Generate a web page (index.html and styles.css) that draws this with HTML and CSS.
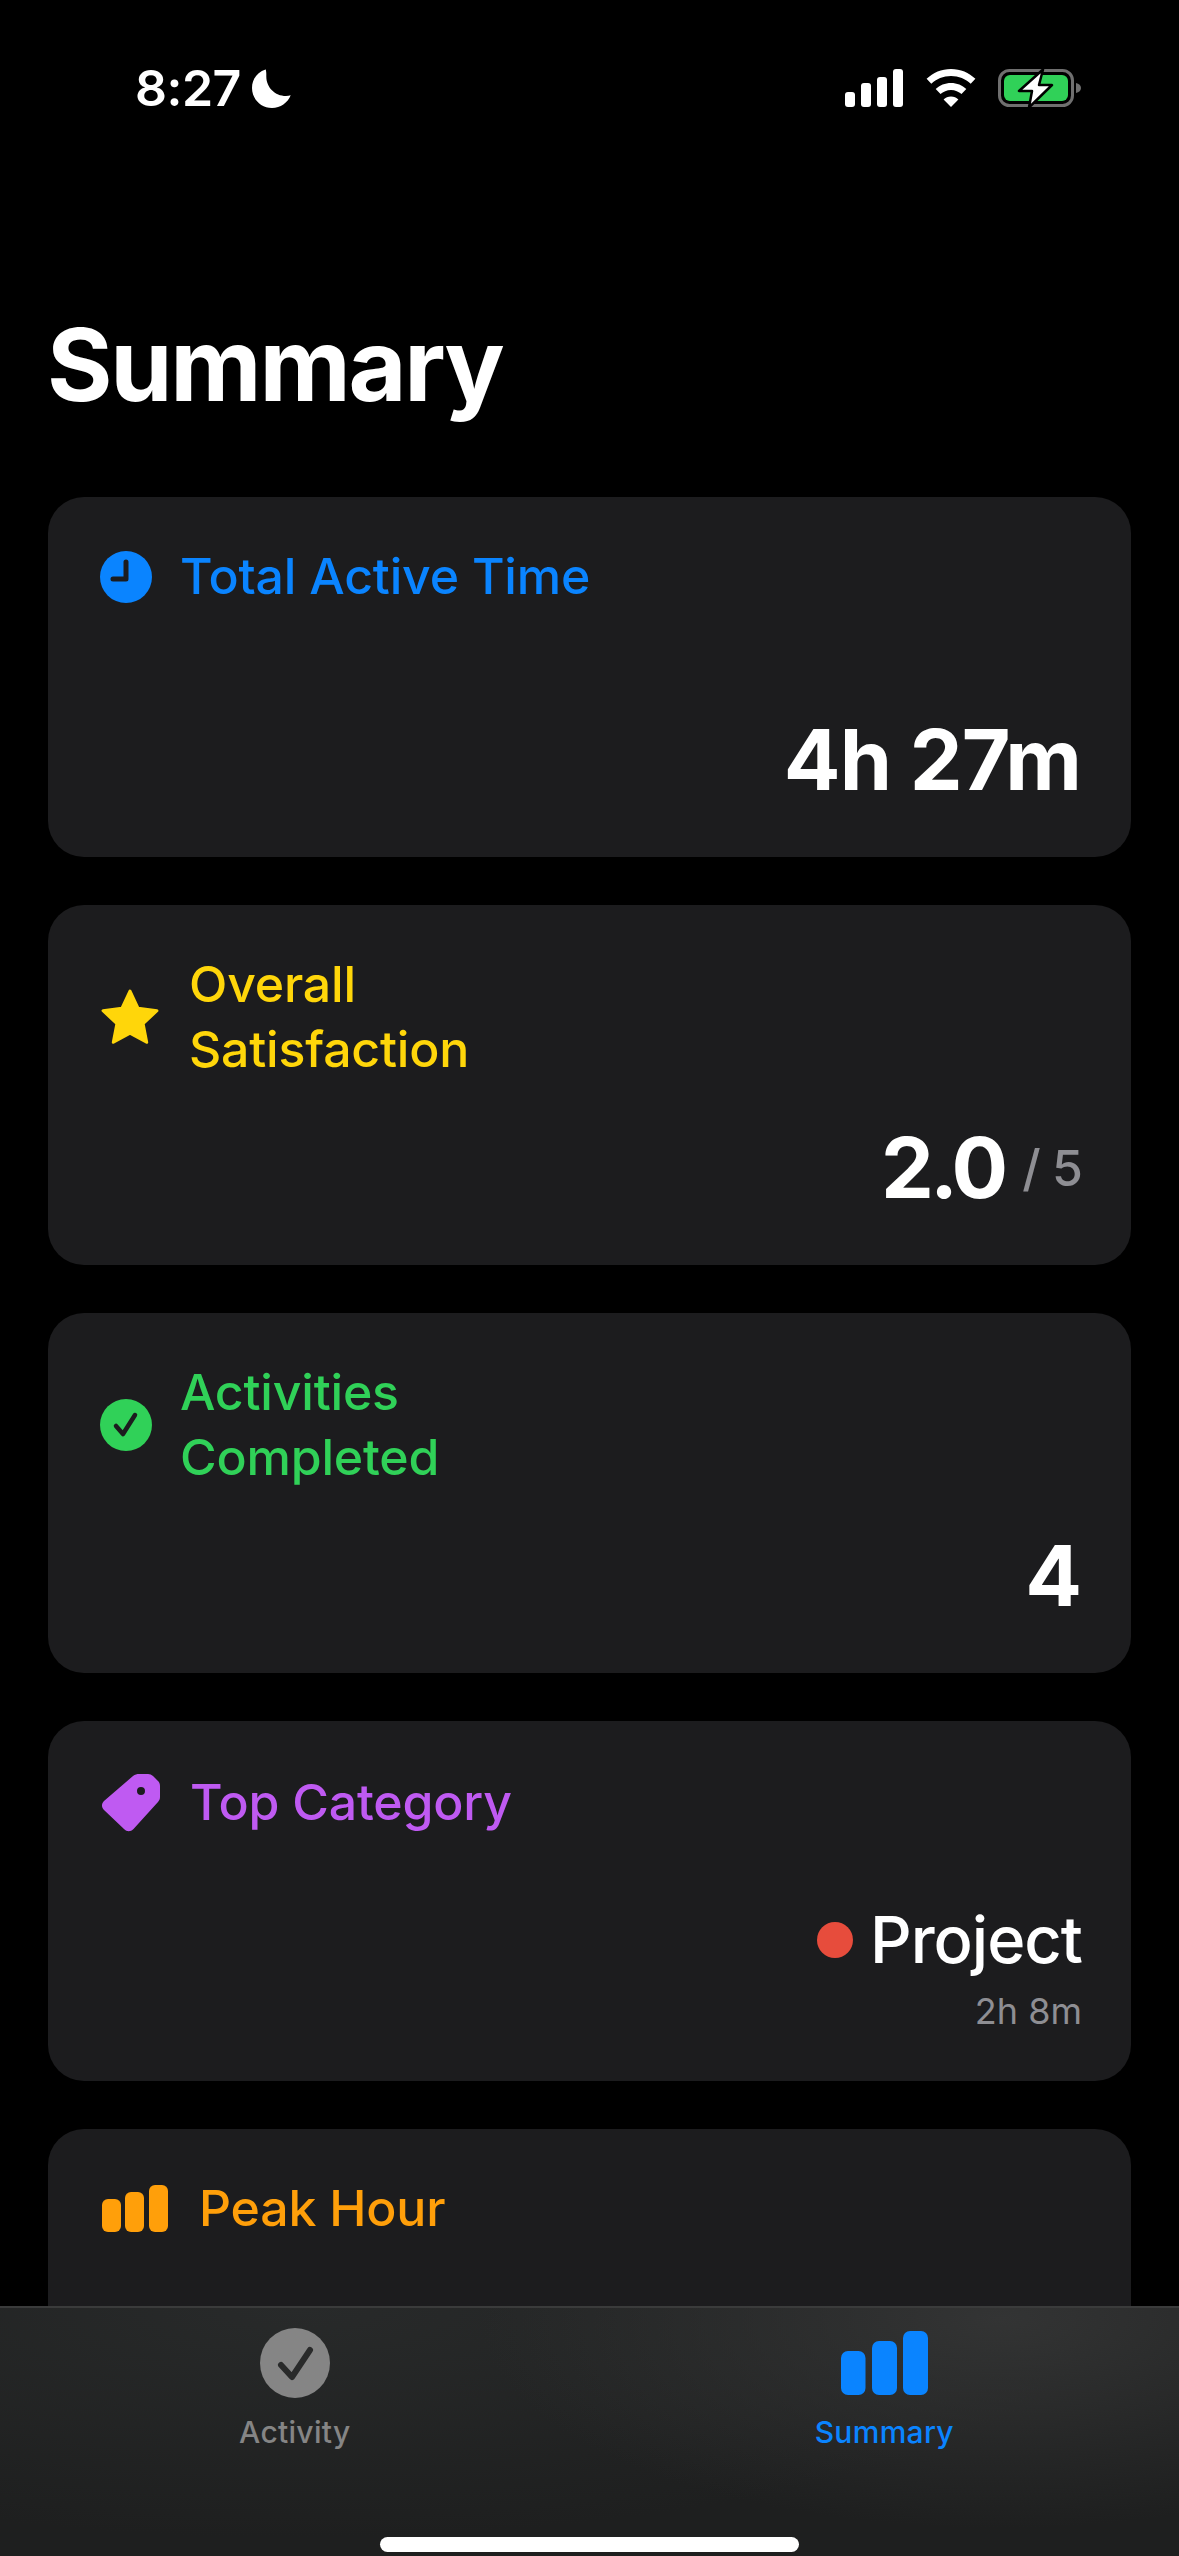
FILE: index.html
```html
<!DOCTYPE html>
<html>
  <head>
    <title>Summary</title>
    <link rel="stylesheet" href="styles.css">
  </head>
  <body>
    <div class="statusBar">
      <div class="statusLeft">
        <span class="clock">8:27</span>
        <svg class="moon" viewBox="0 0 39 39"><path fill="#fff" d="M13.5 0.5C5.5 3 0 10.3 0 19c0 11 8.9 20 20 20 8.400 0 15.700-5.200 18.700-12.700-1.400.4-3 .6-4.700.6-11 0-19.700-8.700-19.700-19.500 0-2.400.2-4.800-.8-7.400z"/></svg>
      </div>
      <div class="statusRight">
        <svg class="signal" viewBox="0 0 59 38">
          <rect x="0" y="23" width="10" height="15" rx="3" fill="#fff"/>
          <rect x="16" y="14" width="10" height="24" rx="3" fill="#fff"/>
          <rect x="32" y="8" width="10" height="30" rx="3" fill="#fff"/>
          <rect x="48" y="0" width="10" height="38" rx="3" fill="#fff"/>
        </svg>
        <svg class="wifi" viewBox="0 0 50 38">
          <path fill="#fff" d="M25 0C15.500 0 7 3.700.6 9.800l4.700 5C10.400 10 17.300 7 25 7s14.600 3 19.700 7.800l4.700-5C43 3.700 34.500 0 25 0z"/>
          <path fill="#fff" d="M25 14c-5.900 0-11.300 2.300-15.300 6.100l4.800 5c2.700-2.600 6.400-4.200 10.500-4.200s7.800 1.600 10.500 4.200l4.800-5C36.300 16.300 30.900 14 25 14z"/>
          <path fill="#fff" d="M25 27.500c-2.900 0-5.500 1.100-7.400 2.900L25 38l7.400-7.600c-1.900-1.800-4.500-2.900-7.400-2.900z"/>
        </svg>
        <svg class="battery" viewBox="0 0 83 40">
          <rect x="1.500" y="2.500" width="73" height="35" rx="10" fill="none" stroke="#6f6f6f" stroke-width="3"/>
          <rect x="6" y="7" width="64" height="26" rx="6" fill="#30d158"/>
          <path fill="#6f6f6f" d="M78 15c3 .5 5 2.500 5 5s-2 4.500-5 5z"/>
          <path fill="#fff" stroke="#000" stroke-width="2.500" stroke-linejoin="round" d="M45 1.500 L21 23 H34 L31 39.500 L54 17 H41z"/>
        </svg>
      </div>
    </div>

    <div class="content">
      <h1 class="title">Summary</h1>

      <div class="card">
        <div class="cardHead blue">
          <svg class="icon iconClock" viewBox="0 0 52 52"><circle cx="26" cy="26" r="26" fill="#0a84ff"/><path d="M26 11v17H13" fill="none" stroke="#1c1c1e" stroke-width="5" stroke-linecap="round" stroke-linejoin="round"/></svg>
          <span class="label labelClock">Total Active Time</span>
        </div>
        <div class="cardValue"><span class="bigNum">4h 27m</span></div>
      </div>

      <div class="card">
        <div class="cardHead yellow">
          <svg class="icon iconStar" viewBox="0 0 58 56"><path fill="#ffd60a" stroke="#ffd60a" stroke-width="3" stroke-linejoin="round" d="M29 3l7.800 16.600 18.200 2.300-13.400 12.500 3.500 18L29 43.500l-16.100 8.900 3.500-18L3 21.900l18.200-2.300z"/></svg>
          <span class="label labelStar">Overall<br>Satisfaction</span>
        </div>
        <div class="cardValue"><span class="bigNum bigNumTight">2.0</span><span class="outOf">/ 5</span></div>
      </div>

      <div class="card">
        <div class="cardHead green">
          <svg class="icon iconClock" viewBox="0 0 52 52"><circle cx="26" cy="26" r="26" fill="#30d158"/><path d="M16 27l7 8 12-19" fill="none" stroke="#1c1c1e" stroke-width="4.500" stroke-linecap="round" stroke-linejoin="round"/></svg>
          <span class="label labelClock">Activities<br>Completed</span>
        </div>
        <div class="cardValue"><span class="bigNum">4</span></div>
      </div>

      <div class="card">
        <div class="cardHead cardHeadLow purple">
          <svg class="icon iconTag" viewBox="0 0 58 58"><path fill="#bf5af2" fill-rule="evenodd" d="M37 0h9c2 0 3.500.7 5 2l5 5c1.400 1.400 2 3 2 5v11c0 2-.7 3.500-2 5L31.500 55c-3 3-6.500 3-9.500 0L2 36c-2.700-2.700-2.700-6 0-9L31 2c2-1.500 4-2 6-2zm2 13a4 4 0 1 0 0 8 4 4 0 0 0 0-8z"/></svg>
          <span class="label labelTag">Top Category</span>
        </div>
        <div class="cardValue cardValueStack">
          <div class="catRow"><span class="catDot"></span><span class="catName">Project</span></div>
          <div class="catTime">2h 8m</div>
        </div>
      </div>

      <div class="card">
        <div class="cardHead orange">
          <svg class="icon iconBars" viewBox="0 0 66 47">
            <rect x="0" y="14" width="19" height="33" rx="6" fill="#ff9f0a"/>
            <rect x="23" y="7" width="19" height="40" rx="6" fill="#ff9f0a"/>
            <rect x="47" y="0" width="19" height="47" rx="6" fill="#ff9f0a"/>
          </svg>
          <span class="label labelBars">Peak Hour</span>
        </div>
      </div>
    </div>

    <div class="tabBar">
      <div class="tabs">
        <div class="tab">
          <svg class="tabIcon" viewBox="0 0 70 70"><circle cx="35" cy="35" r="35" fill="#858585"/><path d="M21 37l11 12 18-27" fill="none" stroke="#292a2a" stroke-width="6" stroke-linecap="round" stroke-linejoin="round"/></svg>
          <span class="tabLabel">Activity</span>
        </div>
        <div class="tab tabActive">
          <svg class="tabIcon" viewBox="0 0 87 70">
            <rect x="0" y="23" width="24.500" height="44" rx="7" fill="#0a84ff"/>
            <rect x="31" y="13" width="25" height="54" rx="7" fill="#0a84ff"/>
            <rect x="62" y="3" width="25" height="64" rx="7" fill="#0a84ff"/>
          </svg>
          <span class="tabLabel">Summary</span>
        </div>
      </div>
      <div class="homeBar"></div>
    </div>
  </body>
</html>
```

FILE: styles.css
```css
* { box-sizing: border-box; }
html, body { margin: 0; padding: 0; }
body { width: 1179px; height: 2556px; overflow: hidden; display: flex; flex-direction: column; background: #000; color: #fff; font-family: Inter, "Noto Sans", sans-serif; }

.statusBar { display: flex; justify-content: space-between; align-items: center; height: 176px; padding: 0 98px 0 135px; flex-shrink: 0; }
.statusLeft { display: flex; align-items: center; gap: 11px; }
.clock { font-size: 50px; font-weight: 600; line-height: 60px; letter-spacing: -0.5px; }
.moon { width: 39px; height: 39px; }
.statusRight { display: flex; align-items: center; gap: 22px; }
.signal { width: 59px; height: 38px; }
.wifi { width: 50px; height: 38px; }
.battery { width: 83px; height: 40px; }

.content { flex: 1; min-height: 0; overflow: hidden; padding: 0 48px; display: flex; flex-direction: column; gap: 48px; }
.title { flex-shrink: 0; height: 273px; padding-top: 128px; font-size: 100px; line-height: 122px; font-weight: 700; letter-spacing: -2.2px; margin: 0 0 0 -1px; }

.card { flex-shrink: 0; height: 360px; background: #1c1c1e; border-radius: 36px; padding: 47px 49px 47px 52px; display: flex; flex-direction: column; justify-content: space-between; }
.cardHead { display: flex; align-items: center; }
.cardHeadLow { margin-top: 2px; }
.label { font-size: 50px; font-weight: 500; line-height: 65px; letter-spacing: -0.2px; }
.icon { flex-shrink: 0; }
.iconClock { width: 52px; height: 52px; }
.labelClock { margin-left: 28px; }
.iconStar { width: 60px; height: 58px; }
.labelStar { margin-left: 29px; }
.iconTag { width: 58px; height: 58px; margin-left: 2px; }
.labelTag { margin-left: 30px; }
.iconBars { width: 66px; height: 47px; margin-left: 2px; }
.labelBars { margin-left: 31px; }

.blue { color: #0a84ff; }
.yellow { color: #ffd60a; }
.green { color: #30d158; }
.purple { color: #bf5af2; }
.orange { color: #ff9f0a; }

.cardValue { display: flex; justify-content: flex-end; align-items: center; }
.cardValueStack { flex-direction: column; align-items: flex-end; }
.bigNum { font-size: 84px; font-weight: 700; line-height: 100px; letter-spacing: -1px; margin-right: 1px; }
.bigNumTight { letter-spacing: -4px; margin-right: 0; }
.outOf { font-size: 50px; color: #8e8e93; margin-left: 18px; font-weight: 500; letter-spacing: -1px; }
.catRow { display: flex; align-items: center; gap: 17px; }
.catDot { width: 36px; height: 36px; border-radius: 50%; background: #e74c3c; }
.catName { font-size: 65px; font-weight: 500; line-height: 76px; letter-spacing: -1px; }
.catTime { font-size: 36px; line-height: 46px; color: #8e8e93; margin-top: 10px; }

.tabBar { flex-shrink: 0; height: 250px; border-top: 2px solid #3a3b3b; display: flex; flex-direction: column; background: radial-gradient(ellipse 520px 210px at 1000px 10px, #333434, rgba(51, 52, 52, 0)), radial-gradient(ellipse 800px 230px at 300px 0, #282a2a, rgba(40, 42, 42, 0)), #1e1f1f; }
.tabs { display: grid; grid-template-columns: 1fr 1fr; padding-top: 20px; }
.tab { display: flex; flex-direction: column; align-items: center; }
.tabIcon { width: 70px; height: 70px; }
.tabActive .tabIcon { width: 87px; }
.tabLabel { font-size: 30px; font-weight: 500; line-height: 40px; margin-top: 14px; color: #858585; letter-spacing: 0.3px; }
.tabActive .tabLabel { color: #0a84ff; }
.homeBar { width: 419px; height: 15px; border-radius: 8px; background: #fff; margin: 85px auto 0 auto; }
```
